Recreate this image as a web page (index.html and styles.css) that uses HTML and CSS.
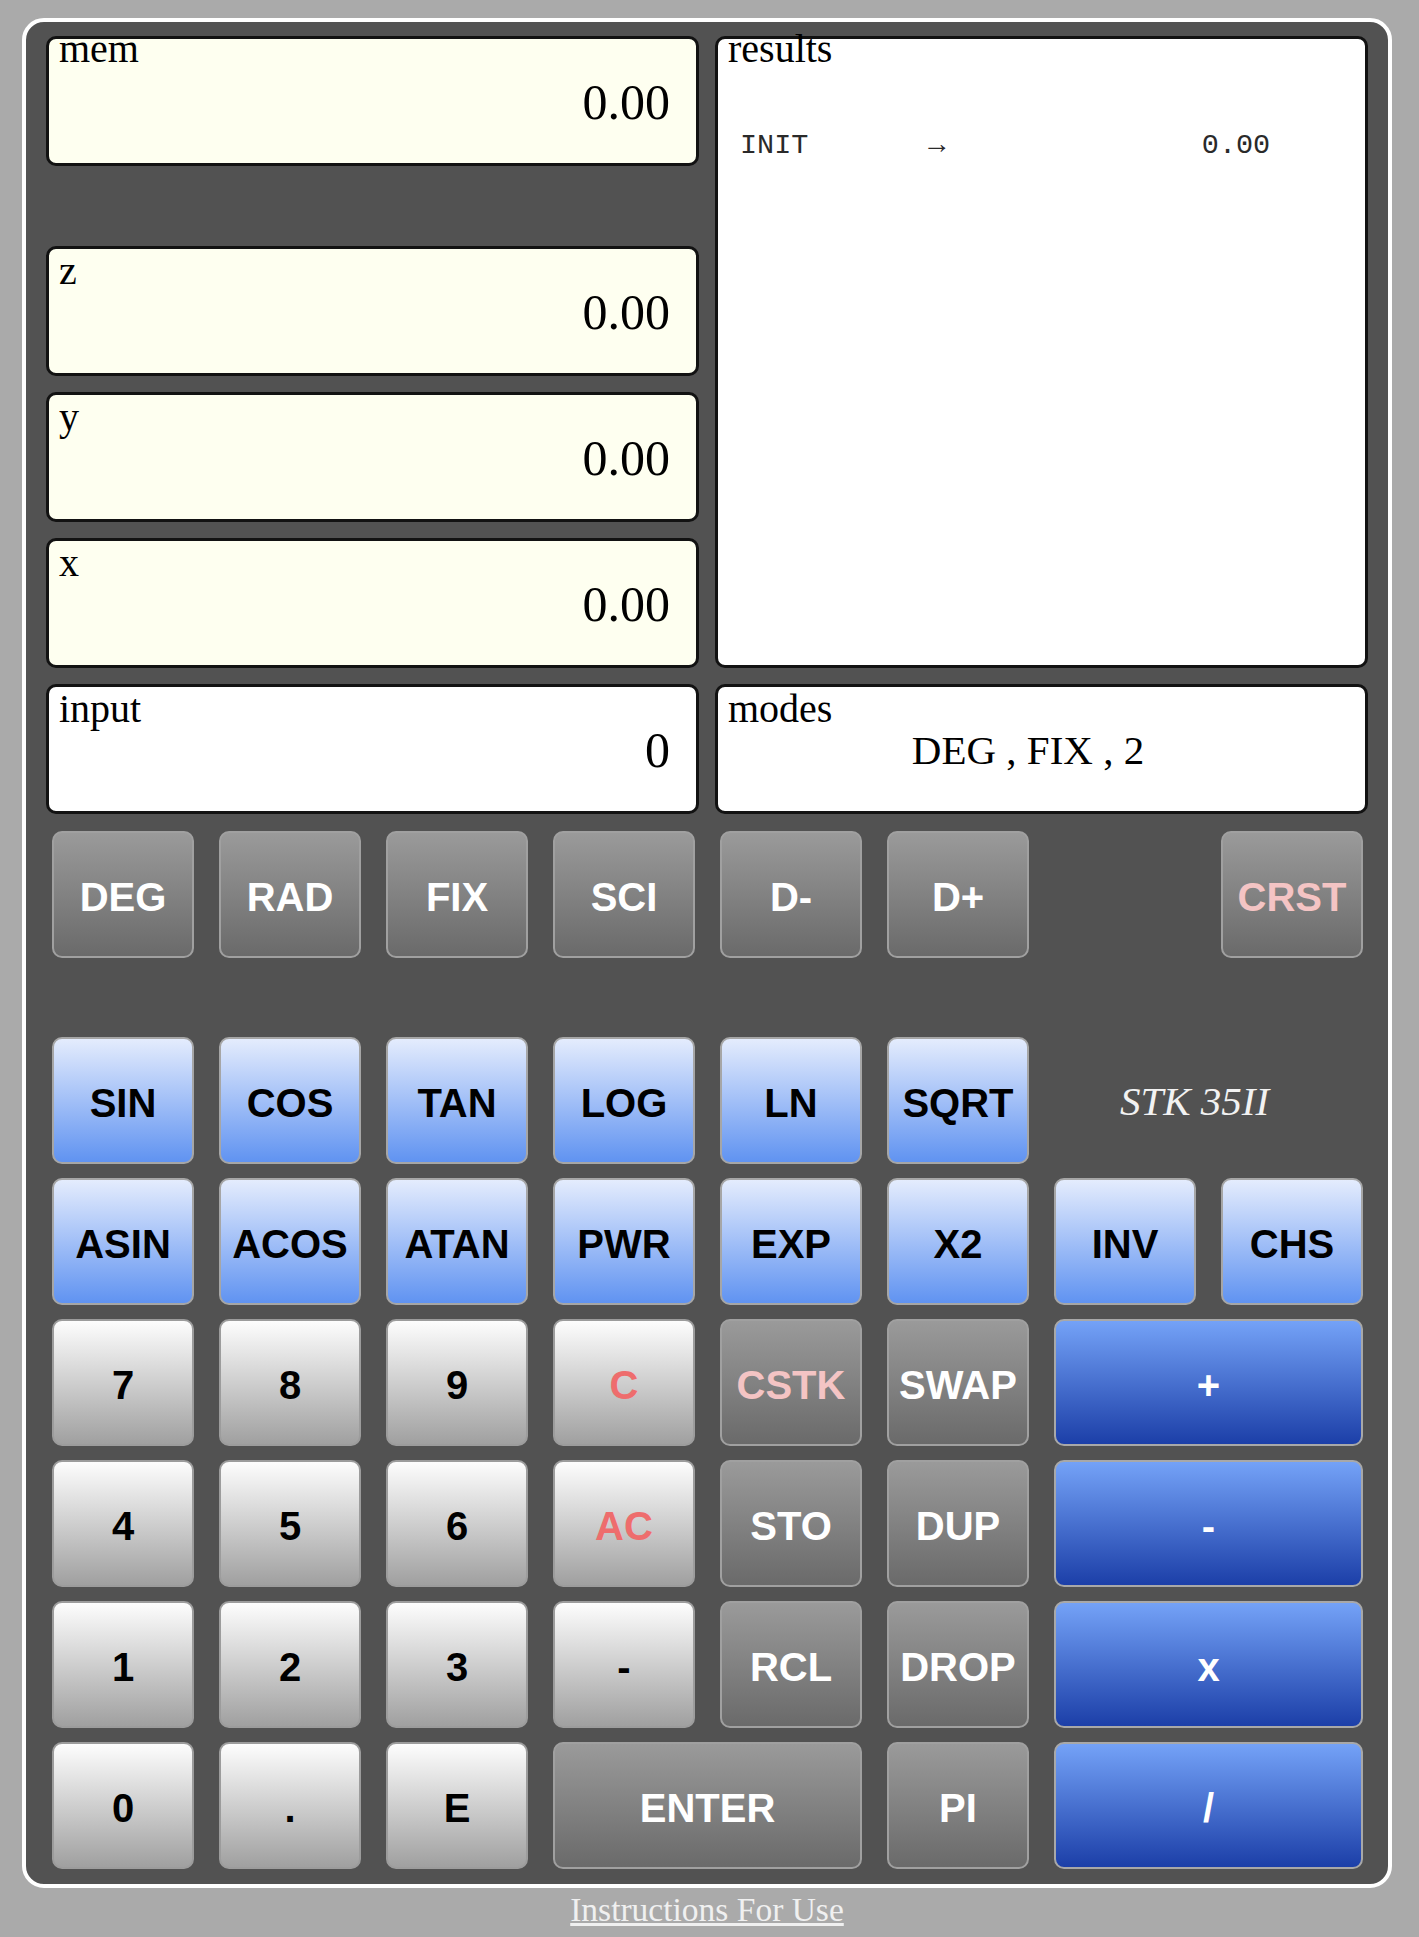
FILE: index.html
```html
<!DOCTYPE html>
<html>
<head>
<meta charset="utf-8">
<title>STK 35II</title>
<link rel="stylesheet" href="styles.css">
</head>
<body>
<div class="page">
  <div class="calc">
    <div class="displays">
      <div class="box stack mem"><div class="lbl top">mem</div><div class="val">0.00</div></div>
      <div class="box results">
        <div class="lbl top">results</div>
        <div class="log">INIT       →               0.00</div>
      </div>
      <div class="box stack z"><div class="lbl">z</div><div class="val">0.00</div></div>
      <div class="box stack y"><div class="lbl">y</div><div class="val">0.00</div></div>
      <div class="box stack x"><div class="lbl">x</div><div class="val">0.00</div></div>
      <div class="box input"><div class="lbl">input</div><div class="val">0</div></div>
      <div class="box modes"><div class="lbl">modes</div><div class="val center">DEG , FIX , 2</div></div>
    </div>

    <div class="keys moderow">
      <div class="key dark">DEG</div>
      <div class="key dark">RAD</div>
      <div class="key dark">FIX</div>
      <div class="key dark">SCI</div>
      <div class="key dark">D-</div>
      <div class="key dark">D+</div>
      <div class="empty"></div>
      <div class="key dark pink">CRST</div>
    </div>

    <div class="keys keypad">
      <div class="key fn">SIN</div>
      <div class="key fn">COS</div>
      <div class="key fn">TAN</div>
      <div class="key fn">LOG</div>
      <div class="key fn">LN</div>
      <div class="key fn">SQRT</div>
      <div class="brand">STK 35II</div>

      <div class="key fn">ASIN</div>
      <div class="key fn">ACOS</div>
      <div class="key fn">ATAN</div>
      <div class="key fn">PWR</div>
      <div class="key fn">EXP</div>
      <div class="key fn">X2</div>
      <div class="key fn">INV</div>
      <div class="key fn">CHS</div>

      <div class="key num">7</div>
      <div class="key num">8</div>
      <div class="key num">9</div>
      <div class="key num red">C</div>
      <div class="key dark pink">CSTK</div>
      <div class="key dark">SWAP</div>
      <div class="key op wide">+</div>

      <div class="key num">4</div>
      <div class="key num">5</div>
      <div class="key num">6</div>
      <div class="key num red">AC</div>
      <div class="key dark">STO</div>
      <div class="key dark">DUP</div>
      <div class="key op wide">-</div>

      <div class="key num">1</div>
      <div class="key num">2</div>
      <div class="key num">3</div>
      <div class="key num">-</div>
      <div class="key dark">RCL</div>
      <div class="key dark">DROP</div>
      <div class="key op wide">x</div>

      <div class="key num">0</div>
      <div class="key num">.</div>
      <div class="key num">E</div>
      <div class="key dark wide">ENTER</div>
      <div class="key dark">PI</div>
      <div class="key op wide">/</div>
    </div>
  </div>
  <div class="footer"><a class="help" href="#">Instructions For Use</a></div>
</div>
</body>
</html>
```

FILE: styles.css
```css
html, body {
  margin: 0;
  padding: 0;
  background: #aaaaaa;
}

body {
  font-family: "Liberation Serif", "Times New Roman", serif;
}

.page {
  width: 1370px;
  margin: 18px 0 0 22px;
}

.calc {
  box-sizing: border-box;
  width: 1370px;
  background: #525252;
  border: 4px solid #ffffff;
  border-radius: 22px;
  padding: 14px 20px 15px 20px;
}

.displays {
  display: grid;
  grid-template-columns: 1fr 1fr;
  grid-template-rows: 130px 48px 130px 130px 130px 130px;
  column-gap: 16px;
  row-gap: 16px;
}

.box {
  box-sizing: border-box;
  border: 3px solid #121212;
  border-radius: 10px;
  background: #ffffff;
  color: #000;
  overflow: visible;
}

.stack {
  background: #fefff0;
}

.mem { grid-column: 1; grid-row: 1; }
.results { grid-column: 2; grid-row: 1 / span 5; }
.z { grid-column: 1; grid-row: 3; }
.y { grid-column: 1; grid-row: 4; }
.x { grid-column: 1; grid-row: 5; }
.input { grid-column: 1; grid-row: 6; }
.modes { grid-column: 2; grid-row: 6; }

.lbl {
  font-size: 40px;
  line-height: 40px;
  height: 40px;
  margin-top: 2px;
  padding-left: 10px;
}

.lbl.top {
  margin-top: -10px;
}

.val {
  font-size: 50px;
  line-height: 50px;
  margin-top: -4px;
  text-align: right;
  padding-right: 26px;
}

.lbl.top + .val {
  margin-top: 8px;
}

.val.center {
  font-size: 41px;
  text-align: center;
  padding-right: 27px;
}

.log {
  font-family: "Liberation Mono", "Courier New", monospace;
  font-size: 28.5px;
  line-height: 32px;
  white-space: pre;
  margin-top: 61px;
  padding-left: 22px;
  color: #2a2a2a;
}

.keys {
  display: grid;
  grid-template-columns: repeat(8, 1fr);
  column-gap: 25px;
  padding: 0 5px 0 6px;
}

.moderow {
  margin-top: 17px;
  grid-template-rows: 127px;
}

.keypad {
  margin-top: 79px;
  grid-auto-rows: 127px;
  row-gap: 14px;
}

.key {
  box-sizing: border-box;
  display: flex;
  align-items: center;
  justify-content: center;
  border: 2px solid #a3a3a3;
  border-radius: 10px;
  font-family: "Liberation Sans", Arial, sans-serif;
  font-weight: bold;
  font-size: 40px;
  padding-top: 6px;
}

.wide {
  grid-column: span 2;
}

.dark {
  color: #ffffff;
  background: linear-gradient(to bottom, #9a9a9a, #6a6a6a);
  border-color: #a0a0a0;
}

.fn {
  color: #000000;
  background: linear-gradient(to bottom, #e4ecfd, #6093f1);
  border-color: #a6a6a6;
}

.num {
  color: #000000;
  background: linear-gradient(to bottom, #fdfdfd, #a0a0a0);
  border-color: #9c9c9c;
}

.op {
  color: #ffffff;
  background: linear-gradient(to bottom, #74a2f7, #1c3fa8);
  border-color: #a8a8a8;
}

.pink {
  color: #f4c4c4;
}

.red {
  color: #ee6d6d;
}

.brand {
  grid-column: span 2;
  display: flex;
  align-items: center;
  justify-content: center;
  padding-right: 28px;
  color: #f2f2f2;
  font-family: "Liberation Serif", "Times New Roman", serif;
  font-style: italic;
  font-size: 41px;
}

.footer {
  text-align: center;
  padding-top: 3px;
}

.help {
  font-family: "Liberation Serif", "Times New Roman", serif;
  font-size: 33.5px;
  color: #f0f0f0;
  text-decoration: underline;
}
```
